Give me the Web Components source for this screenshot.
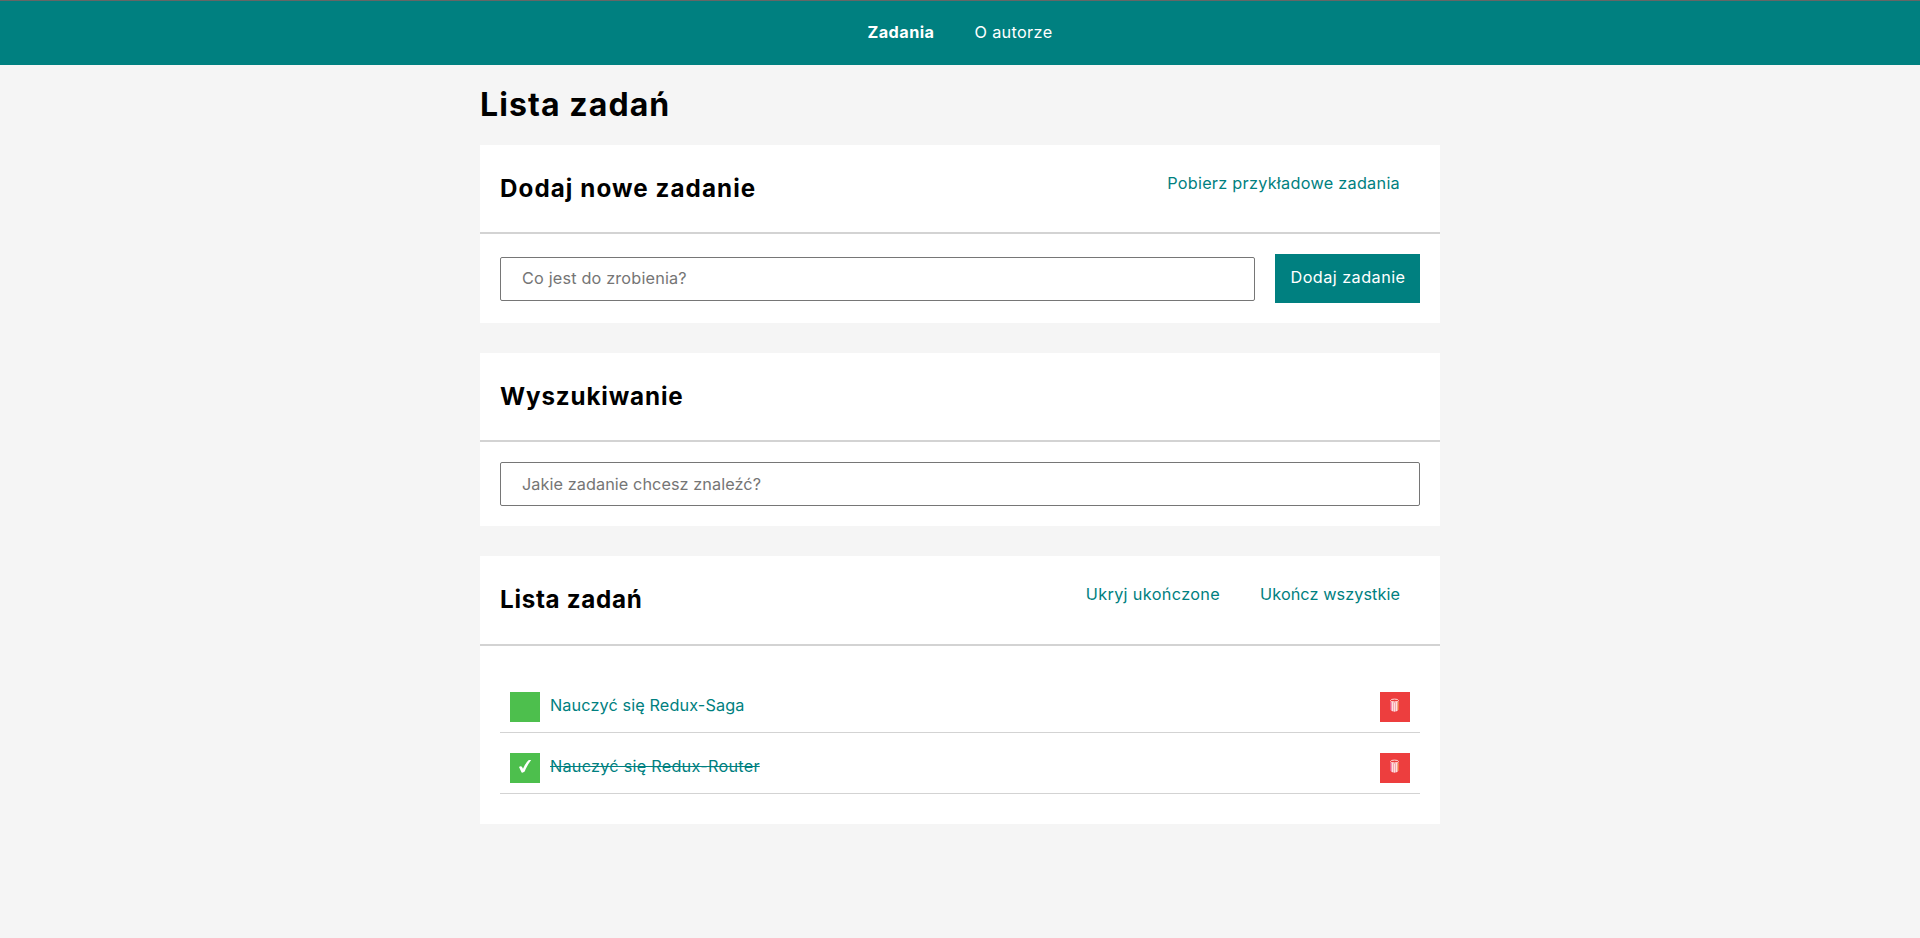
<!DOCTYPE html>
<html lang="pl">
<head>
<meta charset="utf-8">
<title>Lista zadań</title>
<style>
  body { margin: 0; min-height: 100vh; background: #f5f5f5; color: #000; font-family: Inter, "Open Sans", sans-serif; font-size: 16.25px; line-height: 20px; }
  main { display: block; width: 960px; margin: 0 auto; }
</style>
</head>
<body>
<top-nav>
  <nav-entry active style="--ls:.44px">Zadania</nav-entry>
  <nav-entry style="--ls:.34px">O autorze</nav-entry>
</top-nav>
<main>
  <page-title>Lista zadań</page-title>
  <page-section>
    <section-title slot="title" style="--ls:1.07px">Dodaj nowe zadanie</section-title>
    <link-button slot="actions" style="--ls:.27px">Pobierz przykładowe zadania</link-button>
    <task-form></task-form>
  </page-section>
  <page-section>
    <section-title slot="title" style="--ls:.86px">Wyszukiwanie</section-title>
    <text-field label="Jakie zadanie chcesz znaleźć?" style="--ls:.07px"></text-field>
  </page-section>
  <page-section style="--head:88px; --pad:36px 20px 30px">
    <section-title slot="title" style="--ls:.7px">Lista zadań</section-title>
    <link-button slot="actions" style="--ls:.35px">Ukryj ukończone</link-button>
    <link-button slot="actions" style="--ls:.07px">Ukończ wszystkie</link-button>
    <task-item style="--ls:.11px">Nauczyć się Redux-Saga</task-item>
    <task-item done style="--ls:.25px">Nauczyć się Redux-Router</task-item>
  </page-section>
</main>
<script>
const define = (name, html, setup) => {
  const template = document.createElement('template');
  template.innerHTML = html;
  customElements.define(name, class extends HTMLElement {
    constructor() {
      super();
      this.attachShadow({ mode: 'open' }).append(template.content.cloneNode(true));
    }
    connectedCallback() { if (setup) setup(this, this.shadowRoot); }
  });
};

define('top-nav', `
<style>
  :host { display: block; }
  nav { box-sizing: border-box; height: 65px; border-top: 1px solid #666; background: teal; display: flex; align-items: center; justify-content: center; gap: 40px; }
</style>
<nav><slot></slot></nav>`);

define('nav-entry', `
<style>
  :host { display: block; color: #fff; letter-spacing: var(--ls, 0); white-space: nowrap; padding-bottom: 3px; }
  :host([active]) { font-weight: 700; }
</style>
<slot></slot>`);

define('page-title', `
<style>
  :host { display: block; }
  h1 { margin: 0; font-size: 32px; font-weight: 700; line-height: 80px; letter-spacing: 1.1px; }
</style>
<h1><slot></slot></h1>`);

define('section-title', `
<style>
  :host { display: block; }
  h2 { margin: 0; font-size: 24.2px; font-weight: 700; line-height: 30px; letter-spacing: var(--ls, 0); }
</style>
<h2><slot></slot></h2>`);

define('page-section', `
<style>
  :host { display: block; background: #fff; margin-bottom: 30px; }
  header { display: flex; justify-content: space-between; align-items: center; height: var(--head, 87px); border-bottom: 2px solid #d3d3d3; padding: 0 40px 0 20px; }
  .actions { display: flex; gap: 40px; align-self: flex-start; padding-top: 28px; }
  .body { padding: var(--pad, 20px); }
</style>
<header><slot name="title"></slot><div class="actions"><slot name="actions"></slot></div></header>
<div class="body"><slot></slot></div>`);

define('link-button', `
<style>
  :host { display: block; }
  button { display: block; border: 0; padding: 0; background: none; color: teal; font: inherit; line-height: 21px; letter-spacing: var(--ls, 0); white-space: nowrap; }
</style>
<button><slot></slot></button>`);

define('text-field', `
<style>
  :host { display: block; }
  input { display: block; box-sizing: border-box; width: 100%; height: 44px; margin: 0; padding: 0 21px var(--lift, 0); border: 1px solid #767676; border-radius: 2px; background: #fff; font: inherit; letter-spacing: var(--ls, 0); }
  input::placeholder { color: #757575; }
</style>
<input>`, (host, root) => { root.querySelector('input').placeholder = host.getAttribute('label'); });

define('task-form', `
<style>
  :host { display: block; }
  form { display: grid; grid-template-columns: 1fr 145px; gap: 20px; align-items: center; }
  text-field { --ls: .17px; --lift: 2px; padding-top: 1px; }
  button { height: 49px; border: 0; padding: 0 0 4px 1px; background: teal; color: #fff; font: inherit; letter-spacing: .44px; white-space: nowrap; }
</style>
<form><text-field label="Co jest do zrobienia?"></text-field><button type="button">Dodaj zadanie</button></form>`);

define('task-item', `
<style>
  :host { display: grid; grid-template-columns: 30px 1fr 30px; gap: 10px; align-items: center; padding: 10px; border-bottom: 1px solid #d3d3d3; }
  :host(:not(:last-child)) { margin-bottom: 10px; }
  button { display: block; width: 30px; height: 30px; border: 0; padding: 0; }
  .toggle { background: #4dbf4d; }
  .remove { background: #ed3e3e; }
  svg { display: block; width: 30px; height: 30px; }
  .toggle svg { visibility: hidden; }
  :host([done]) .toggle svg { visibility: visible; }
  .text { color: teal; letter-spacing: var(--ls, 0); padding-bottom: 5px; }
  .text span { display: inline-block; }
  :host([done]) .text span { text-decoration: line-through 1px; text-decoration-skip-ink: none; }
</style>
<button class="toggle" aria-label="Ukończ"><svg viewBox="0 0 30 30"><path d="M9 14 C10 13 11.6 13 12.2 14.2 L13 15.8 C14.6 12 16.6 9 18.8 7 L21.2 6.9 C18.6 10.4 16.2 14.4 14.7 18.6 Q13 20 11.6 19.6 Z" fill="#fff"/></svg></button>
<div class="text"><span><slot></slot></span></div>
<button class="remove" aria-label="Usuń"><svg viewBox="0 0 30 30" fill="none"><path d="M10.6 9 11 18.4 Q14.5 20.8 18 18.4 L18.4 9Z" fill="#f4a6b0"/><path d="M12.5 10V19M14.5 11V19.5M16.5 10V19" stroke="#ffe0dc" stroke-width="1"/><path d="M10.8 10V18" stroke="#f268b4" stroke-width=".8"/><path d="M18.2 10V18" stroke="#f0a040" stroke-width=".8"/><ellipse cx="14.5" cy="8.5" rx="4" ry="1.4" fill="#ed3e3e" stroke="#ffd9d6"/></svg></button>`);
</script>
</body>
</html>
